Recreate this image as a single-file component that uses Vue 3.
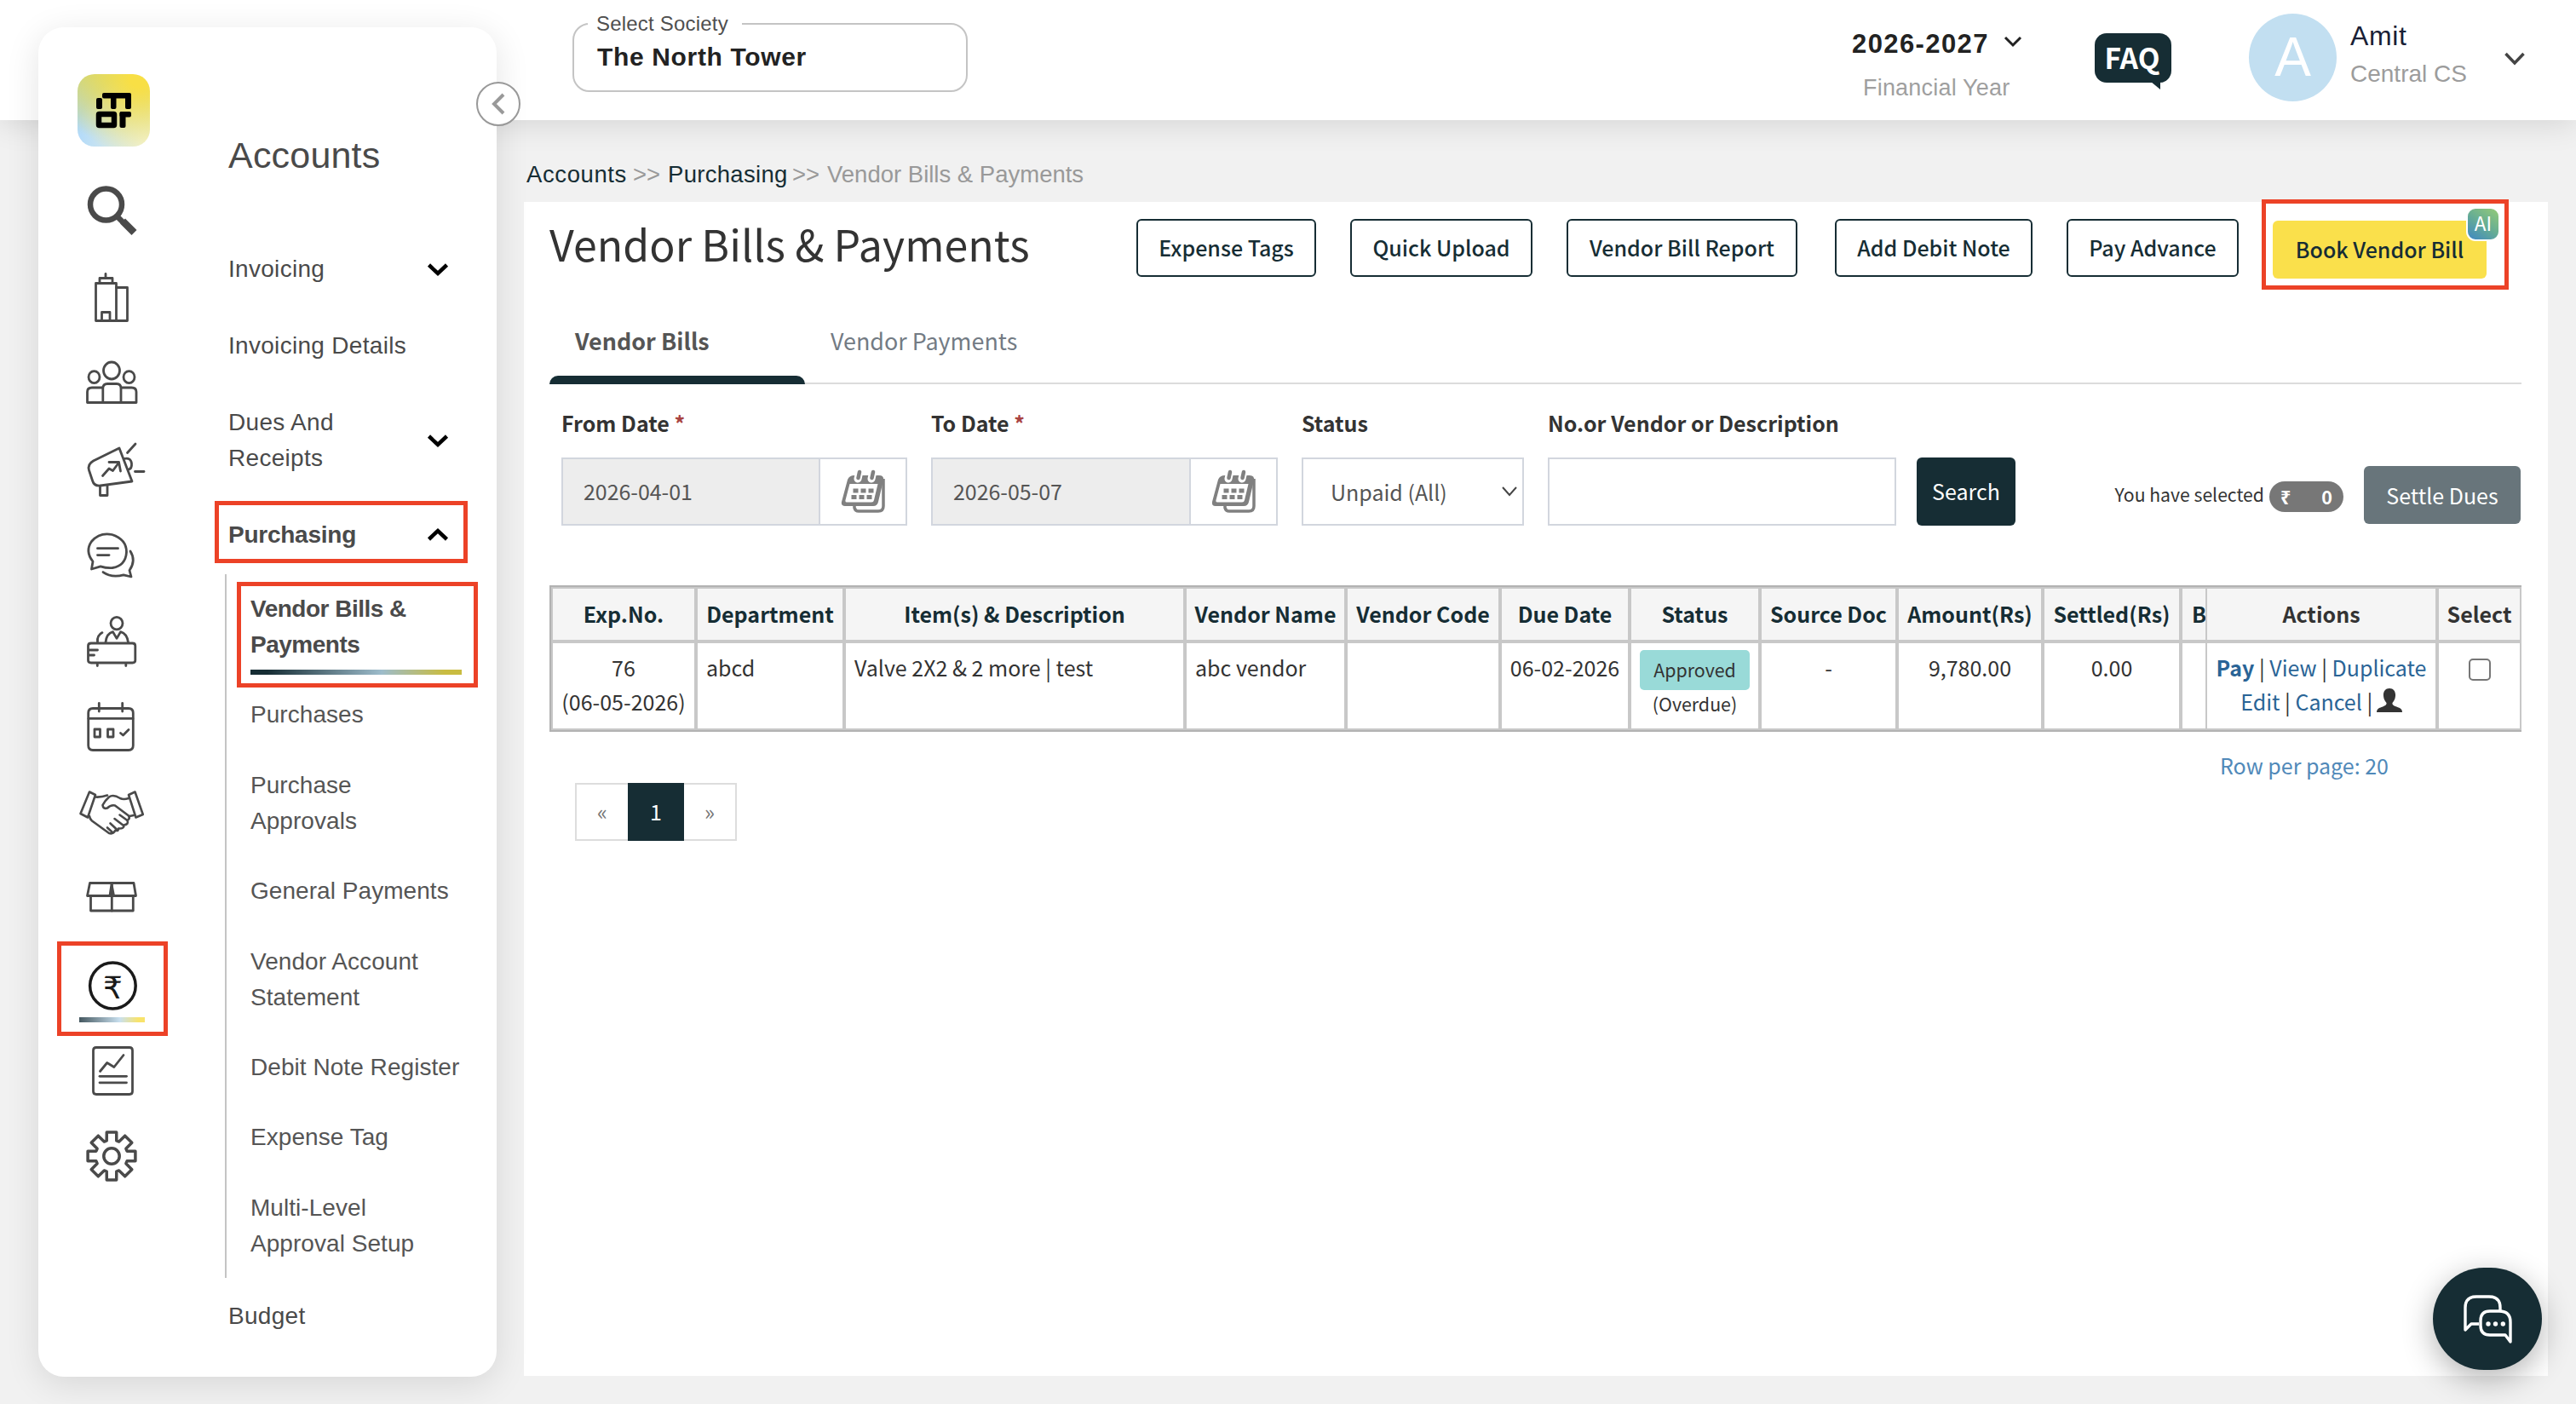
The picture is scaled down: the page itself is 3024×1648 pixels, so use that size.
<script setup>
import { ref } from 'vue'

const menu = ref([
  { label: 'Invoicing', arrow: 'down' },
  { label: 'Invoicing Details' },
  { label: 'Dues And Receipts', arrow: 'down' },
  { label: 'Purchasing', arrow: 'up', active: true },
])

const submenu = ref([
  'Vendor Bills & Payments',
  'Purchases',
  'Purchase Approvals',
  'General Payments',
  'Vendor Account Statement',
  'Debit Note Register',
  'Expense Tag',
  'Multi-Level Approval Setup',
])

const actions = ref([
  { label: 'Expense Tags', width: 211 },
  { label: 'Quick Upload', width: 214 },
  { label: 'Vendor Bill Report', width: 271 },
  { label: 'Add Debit Note', width: 232 },
  { label: 'Pay Advance', width: 202 },
])

const columns = ref([
  { label: 'Exp.No.', width: 172 },
  { label: 'Department', width: 174 },
  { label: 'Item(s) & Description', width: 400 },
  { label: 'Vendor Name', width: 189 },
  { label: 'Vendor Code', width: 181 },
  { label: 'Due Date', width: 152 },
  { label: 'Status', width: 153 },
  { label: 'Source Doc', width: 161 },
  { label: 'Amount(Rs)', width: 171 },
  { label: 'Settled(Rs)', width: 162 },
  { label: 'B', width: 27, cls: 'cut' },
  { label: 'Actions', width: 274, cls: 'dark first-fixed' },
  { label: 'Select', width: 97, cls: 'dark last' },
])

const dateFields = ref([
  { label: 'From Date', value: '2026-04-01', width: 406 },
  { label: 'To Date', value: '2026-05-07', width: 407 },
])

// eight teeth around the hub
const gearPath = () => {
  const pts = []
  for (let i = 0; i < 8; i++) {
    const a = (i * Math.PI) / 4 - Math.PI / 2
    const steps = [
      [19, -0.31],
      [28.5, -0.2],
      [28.5, 0.2],
      [19, 0.31],
    ]
    steps.forEach(([r, d]) => {
      pts.push(`${(40 + r * Math.cos(a + d)).toFixed(1)} ${(39 + r * Math.sin(a + d)).toFixed(1)}`)
    })
  }
  return 'M' + pts.join('L') + 'Z'
}

const icons = ref([
  { name: 'search', width: 6.5, paths: ['M15 32a18.5 18.5 0 1 0 37 0a18.5 18.5 0 1 0 -37 0', 'M47 46.500L52 51.500'] },
  {
    name: 'building',
    width: 2.8,
    paths: [
      'M21.500 23.500H45.500V67.500H21.500Z',
      'M26 23V17.500H41V23',
      'M33 17V12.500',
      'M45.500 28.500H58.500V67.500H45.500',
      'M28.500 67V57.500H38V67',
    ],
  },
  {
    name: 'people',
    width: 2.8,
    paths: [
      'M30.500 25a9.500 10 0 1 0 19 0a9.500 10 0 1 0 -19 0',
      'M13 32.600a6.500 7 0 1 0 13 0a6.500 7 0 1 0 -13 0',
      'M54 32.600a6.500 7 0 1 0 13 0a6.500 7 0 1 0 -13 0',
      'M29.800 62.500V46Q29.800 40.500 35 40.500H46Q51 40.500 51 46V62.500',
      'M29 45H17Q11.500 45 11.500 50V62.500H69V50Q69 45 63.500 45H52',
    ],
  },
  {
    name: 'megaphone',
    width: 2.8,
    paths: [
      'M49 15L18.500 30Q11.500 34 13.500 41L17.500 53Q19.500 60 27 59L64 54Z',
      'M54.500 27.500Q62.500 25.500 63.500 33Q64 39 60 40',
      'M58.500 20.500L68 10',
      'M67.500 42.500H78',
      'M29.500 47.500L37 39L41.500 41.500L48.500 32',
      'M37 31.500H48.500L50.500 42',
      'M26.500 60V70.500H35V59',
    ],
  },
  {
    name: 'chat',
    width: 2.8,
    paths: [
      'M16.500 56L18 47Q8.500 35 16.500 23.500Q26 12.500 40.500 15.500Q57.500 21 57.500 36Q56.500 52 41 54.500Q34 55 27 52.800Z',
      'M23.500 31.700H47.500',
      'M23.500 39.600H37',
      'M62 35Q69 46 61 57.500L63 65L54 62.800Q40 66.500 30 59.600',
    ],
  },
  {
    name: 'reception',
    width: 2.8,
    paths: [
      'M39 18.600a7 7.200 0 1 0 14 0a7 7.200 0 1 0 -14 0',
      'M33 41Q34 30.500 41.500 28.600L46 36.400L50.600 28.600Q58 30.500 59.500 41',
      'M23.500 41Q22.500 33 29 29.600',
      'M16 42H64.500Q67.800 42 67.800 45V62Q67.800 65 64.500 65H16Q12.500 65 12.500 62V45Q12.500 42 16 42Z',
      'M14 50H23.500',
      'M14 56H19.500',
      'M23.300 66V68.500',
      'M56.800 66V68.500',
    ],
  },
  {
    name: 'calendar',
    width: 2.8,
    paths: [
      'M18 17.500H60Q65.300 17.500 65.300 23V61Q65.300 66.500 60 66.500H18Q12.700 66.500 12.700 61V23Q12.700 17.500 18 17.500Z',
      'M13 29.400H65',
      'M25.300 11.500V21',
      'M52.700 11.500V21',
      'M20 42H26.500V51H20Z',
      'M35.500 42H42V51H35.500Z',
      'M50.500 46.500L53.500 49L60 42.500',
    ],
  },
  {
    name: 'handshake',
    width: 2.6,
    paths: [
      'M14 14.500L21 18L12 44.500L3.500 40Z',
      'M67.500 14.500L60 18L68.500 44.500L76.800 41Z',
      'M21 20.500Q28 21 35 18.500',
      'M60 22Q54 24 50 22Q42 17 37 20.500Q32 25 29.500 30Q30 35 35 33.500Q39 29.500 44 30.500L60 42.500Q62 46 58.500 48Q60.500 52.500 54.500 53.500Q55 58 48 57.500Q48.500 61 44.500 59.500Q42 64.500 37 63L17 48.500Q14.500 46.500 14 43',
      'M61 43L66 42',
      'M49.500 41.500L58.500 48',
      'M43.500 46L54 54',
      'M38.500 51.500L46 58.500',
      'M35 56.500L41 62',
    ],
  },
  {
    name: 'box',
    width: 2.8,
    paths: ['M14.500 20.500H66L68.500 35.500H11.500Z', 'M15.500 36V53H65.300V36', 'M40.300 21V53', 'M40 22L38 35H42.500Z'],
  },
  { name: 'accounts', width: 3.5, paths: ['M14.600 40a26.800 27 0 1 0 53.600 0a26.800 27 0 1 0 -53.600 0'] },
  {
    name: 'report',
    width: 2.8,
    paths: [
      'M22 11.500H61Q64.500 11.500 64.500 15V63Q64.500 66.500 61 66.500H22Q18.500 66.500 18.500 63V15Q18.500 11.500 22 11.500Z',
      'M26.500 39.500L34.700 29.500L42.900 34.500L54 20.500',
      'M26 45.300H57.500',
      'M26 52.800H57.500',
    ],
  },
  { name: 'settings', width: 3.5, paths: [gearPath(), 'M30.800 39a9.200 9.200 0 1 0 18.400 0a9.200 9.200 0 1 0 -18.400 0'] },
])
</script>

<template>
  <div class="page">
    <header class="topbar">
      <fieldset class="society">
        <legend>Select Society</legend>
        <span>The North Tower</span>
      </fieldset>

      <div class="year">
        <div class="year-value">
          2026-2027
          <svg width="24" height="16" viewBox="0 0 24 16" fill="none" stroke="#222" stroke-width="3">
            <polyline points="3 3 12 12 21 3" />
          </svg>
        </div>
        <div class="year-label">Financial Year</div>
      </div>

      <div class="faq">FAQ</div>

      <div class="user">
        <div class="avatar">A</div>
        <div class="user-text">
          <div class="user-name">Amit</div>
          <div class="user-role">Central CS</div>
        </div>
        <svg width="28" height="20" viewBox="0 0 28 20" fill="none" stroke="#444" stroke-width="3.5">
          <polyline points="3.500 4 14 15 24.500 4" />
        </svg>
      </div>
    </header>

    <div class="body">
      <aside class="sidebar">
        <div class="rail">
          <div class="logo">
            <svg width="85" height="85" viewBox="0 0 85 85">
              <rect x="22" y="28" width="7" height="13" rx="2" />
              <rect x="29" y="22" width="34" height="6.500" rx="2" />
              <rect x="39" y="24" width="6.500" height="17" rx="2" />
              <rect x="56" y="24" width="7" height="17" rx="2" />
              <rect x="25" y="47" width="18" height="13" rx="0.500" fill="none" stroke="#000" stroke-width="6.500" />
              <rect x="49.500" y="44" width="7" height="19" rx="2" />
              <rect x="49.500" y="44" width="13.500" height="6.500" rx="2" />
            </svg>
          </div>
          <nav>
            <div v-for="icon in icons" :key="icon.name" class="slot" :class="icon.name">
              <svg width="80" height="80" viewBox="0 0 80 80" fill="none" stroke-linecap="round" stroke-linejoin="round">
                <path v-for="(d, i) in icon.paths" :key="i" :d="d" :stroke-width="icon.width" />
                <path v-if="icon.name === 'search'" d="M53 51.500L66.500 65" stroke-width="8.500" stroke-linecap="butt" />
                <text v-if="icon.name === 'accounts'" x="41.500" y="55" text-anchor="middle">₹</text>
              </svg>
            </div>
          </nav>
        </div>

        <div class="menu">
          <h2>Accounts</h2>
          <div v-for="item in menu" :key="item.label" class="menu-item" :class="{ 'is-active': item.active }">
            <span>{{ item.label }}</span>
            <svg v-if="item.arrow" width="28" height="18" viewBox="0 0 28 18" fill="none" stroke="#000" stroke-width="4.500">
              <polyline :points="item.arrow === 'down' ? '3.500 4 14 14 24.500 4' : '3.500 14 14 4 24.500 14'" />
            </svg>
          </div>
          <div class="submenu">
            <div v-for="(item, index) in submenu" :key="item" class="submenu-item" :class="{ 'is-active': index === 0 }">
              {{ item }}
            </div>
          </div>
          <div class="menu-item">Budget</div>
        </div>

        <button class="collapse">
          <svg width="18" height="26" viewBox="0 0 18 26" fill="none" stroke="#999" stroke-width="4">
            <polyline points="15 2 4 13 15 24" />
          </svg>
        </button>
      </aside>

      <main>
        <div class="breadcrumb">
          <a class="crumb-first">Accounts</a><i>&gt;&gt;</i><a class="crumb-second">Purchasing</a><i>&gt;&gt;</i><span>Vendor Bills &amp; Payments</span>
        </div>

        <section class="panel">
          <div class="title-row">
            <h1>Vendor Bills &amp; Payments</h1>
            <div class="actions">
              <button v-for="a in actions" :key="a.label" class="btn-outline" :style="{ width: a.width + 'px' }">
                {{ a.label }}
              </button>
              <div class="book">
                <button class="btn-book">Book Vendor Bill</button>
                <span class="ai">AI</span>
              </div>
            </div>
          </div>

          <div class="tabs">
            <div class="tab is-active">Vendor Bills</div>
            <div class="tab">Vendor Payments</div>
          </div>

          <div class="filters">
            <div v-for="f in dateFields" :key="f.label" class="field" :style="{ width: f.width + 'px' }">
              <label>{{ f.label }} <em>*</em></label>
              <div class="date-input">
                <span>{{ f.value }}</span>
                <div class="date-btn">
                  <svg width="54" height="54" viewBox="0 0 54 54">
                    <path d="M16 44V46Q17 50 21 50H44Q50 50 50 44V12" fill="none" stroke="#808080" stroke-width="3.500" />
                    <path d="M16 8H45Q51 8 50 14L44 39Q43 44 38 44H5Q0 44 1 39L8 13Q10 8 16 8Z" fill="#808080" />
                    <path d="M10.500 18H43.500L39 37Q38.500 39.500 36 39.500H7Q5 39.500 5.500 37Z" fill="#fff" />
                    <path d="M22 3L20 12M38 3L36 12" stroke="#fff" stroke-width="9" stroke-linecap="round" />
                    <path d="M22 4L20.500 11M38 4L36.500 11" stroke="#808080" stroke-width="4.500" stroke-linecap="round" />
                    <path d="M14.500 26H20.500M23.500 26H29.500M32.500 26H38.500M12.500 33.500H18.500M21.500 33.500H27.500M30.500 33.500H36.500" stroke="#808080" stroke-width="5" />
                  </svg>
                </div>
              </div>
            </div>
            <div class="field status">
              <label>Status</label>
              <div class="select">
                Unpaid (All)
                <svg width="20" height="14" viewBox="0 0 20 14" fill="none" stroke="#444" stroke-width="2">
                  <polyline points="2 2 10 11 18 2" />
                </svg>
              </div>
            </div>
            <div class="field keyword">
              <label>No.or Vendor or Description</label>
              <div class="text-input"></div>
            </div>
            <button class="btn-search">Search</button>

            <div class="settle">
              <span class="settle-text">You have selected</span>
              <span class="pill"><b>₹</b><b>0</b></span>
              <button class="btn-settle">Settle Dues</button>
            </div>
          </div>

          <table>
            <colgroup>
              <col v-for="c in columns" :key="c.label" :style="{ width: c.width + 'px' }" />
            </colgroup>
            <thead>
              <tr>
                <th v-for="c in columns" :key="c.label" :class="c.cls">{{ c.label }}</th>
              </tr>
            </thead>
            <tbody>
              <tr>
                <td>76<br />(06-05-2026)</td>
                <td class="left">abcd</td>
                <td class="left">Valve 2X2 &amp; 2 more | test</td>
                <td class="left">abc vendor</td>
                <td></td>
                <td>06-02-2026</td>
                <td>
                  <div class="badge">Approved</div>
                  <div class="overdue">(Overdue)</div>
                </td>
                <td>-</td>
                <td>9,780.00</td>
                <td>0.00</td>
                <td></td>
                <td class="first-fixed row-links">
                  <div><a class="pay">Pay</a> | <a>View</a> | <a>Duplicate</a></div>
                  <div>
                    <a>Edit</a> | <a>Cancel</a> |
                    <svg width="30" height="28" viewBox="0 0 30 28" fill="#333">
                      <path d="M15 0C10 0 7.500 4 8 9C8.300 13 10 15 11.500 17C12 20 9 21 3 23Q0 24.500 0 28H30Q30 24.500 27 23C21 21 18 20 18.500 17C20 15 21.700 13 22 9C22.500 4 20 0 15 0Z" />
                    </svg>
                  </div>
                </td>
                <td class="last"><div class="checkbox"></div></td>
              </tr>
            </tbody>
          </table>

          <div class="table-footer">
            <div class="pagination">
              <span>«</span>
              <span class="current">1</span>
              <span>»</span>
            </div>
            <a class="per-page">Row per page: 20</a>
          </div>
        </section>
      </main>
    </div>

    <button class="chat-fab">
      <svg width="128" height="120" viewBox="0 0 128 120" fill="none" stroke="#fff" stroke-width="3.400" stroke-linejoin="round">
        <path d="M79 51V47Q79 34 66 34H51Q38 34 38 47V73L45 66H54" />
        <path d="M67 51H78Q91 51 91 64V87L85 79H67Q56 79 56 68V62Q56 51 67 51Z" />
        <g fill="#fff" stroke="none">
          <circle cx="65" cy="66" r="2.700" />
          <circle cx="73.500" cy="66" r="2.700" />
          <circle cx="82.300" cy="66" r="2.700" />
        </g>
      </svg>
    </button>
  </div>
</template>

<style>
body {
  margin: 0;
  overflow: hidden;
}
</style>

<style scoped>
.page {
  position: relative;
  width: 3024px;
  height: 1648px;
  overflow: hidden;
  background: #f1f1f1;
  color: #333;
  font-family: 'Noto Sans CJK SC', 'Noto Sans', sans-serif;
  font-size: 25px;
}

.page *,
.page *::before,
.page *::after {
  box-sizing: border-box;
}

button {
  border: none;
  padding: 0;
  font-family: inherit;
  font-size: 25px;
  cursor: pointer;
}

/* Top bar */
.topbar {
  display: flex;
  align-items: flex-start;
  height: 141px;
  padding-left: 672px;
  background: #fff;
  box-shadow: 0 4px 34px rgba(0, 0, 0, 0.12);
  font-family: 'Liberation Sans', Arial, sans-serif;
}

.society {
  width: 464px;
  height: 94px;
  margin: 14px 0 0;
  padding: 0 0 0 27px;
  border: 2px solid #c4c4c4;
  border-radius: 20px;
}

.society legend {
  margin-left: -11px;
  padding: 0 16px 0 10px;
  color: #4f4f4f;
  font-size: 24px;
  line-height: 28px;
  letter-spacing: 0.2px;
}

.society span {
  display: block;
  margin-top: 8px;
  color: #222;
  font-size: 30px;
  font-weight: 700;
  line-height: 34px;
  letter-spacing: 0.65px;
}

.year {
  margin-left: 1038px;
  width: 211px;
}

.year-value {
  display: flex;
  align-items: center;
  gap: 16px;
  margin-top: 32px;
  color: #222;
  font-size: 31px;
  font-weight: 700;
  line-height: 40px;
  letter-spacing: 1.4px;
}

.year-value svg {
  margin-top: -6px;
}

.year-label {
  margin: 11px 0 0 13px;
  color: #9f9f9f;
  font-size: 27px;
  line-height: 40px;
  letter-spacing: 0.2px;
}

.faq {
  position: relative;
  width: 90px;
  height: 58px;
  margin: 39px 0 0 74px;
  padding-right: 2px;
  border-radius: 14px;
  background: #162d34;
  color: #fff;
  font-family: 'Noto Sans CJK SC', sans-serif;
  font-size: 33.5px;
  font-weight: 700;
  line-height: 56px;
  text-align: center;
}

.faq::after {
  content: '';
  position: absolute;
  right: 13px;
  bottom: -8px;
  width: 11px;
  height: 9px;
  background: #162d34;
  clip-path: polygon(0 0, 100% 0, 100% 100%);
}

.user {
  display: flex;
  align-items: flex-start;
  margin: 16px 0 0 91px;
}

.avatar {
  width: 103px;
  height: 103px;
  border-radius: 50%;
  background: #c2dff1;
  color: #fff;
  font-size: 64px;
  line-height: 103px;
  text-align: center;
}

.user-text {
  width: 179px;
  margin-left: 16px;
  padding-top: 6px;
}

.user-name {
  color: #1a1f36;
  font-size: 32px;
  line-height: 40px;
  letter-spacing: 0.6px;
}

.user-role {
  margin-top: 5px;
  color: #9c9c9c;
  font-size: 28px;
  line-height: 40px;
}

.user > svg {
  margin-top: 43px;
}

/* Sidebar */
.body {
  display: flex;
  align-items: flex-start;
}

.sidebar {
  position: relative;
  display: flex;
  width: 538px;
  height: 1584px;
  margin: -109px 0 0 45px;
  border-radius: 30px;
  background: #fff;
  box-shadow: 0 8px 40px rgba(0, 0, 0, 0.11);
  font-family: 'Liberation Sans', Arial, sans-serif;
}

.rail {
  width: 223px;
  padding: 55px 0 0 46px;
}

.logo {
  width: 85px;
  height: 85px;
  border-radius: 20px;
  background: radial-gradient(circle at 85% 5%, #f8df45 10%, rgba(248, 223, 69, 0) 85%),
    radial-gradient(circle at 100% 100%, #f2f4dc 5%, rgba(242, 244, 220, 0) 75%),
    linear-gradient(5deg, #afd9fc 15%, #c6d48a 90%);
}

.logo svg,
.slot svg {
  display: block;
}

nav {
  margin-top: 25px;
}

.slot {
  position: relative;
  width: 80px;
  height: 101px;
  padding-top: 10.5px;
  stroke: #4a4a4a;
}

.slot.settings {
  padding-top: 10px;
}

.slot.accounts {
  stroke: #1a1a1a;
}

.slot text {
  stroke: none;
  fill: #1a1a1a;
  font-family: 'Liberation Sans', 'DejaVu Sans', sans-serif;
  font-size: 36px;
}

.slot.accounts::before {
  content: '';
  position: absolute;
  left: -24px;
  top: -1px;
  width: 130px;
  height: 111px;
  border: 5px solid #ec4227;
}

.slot.accounts::after {
  content: '';
  position: absolute;
  left: 2px;
  top: 88px;
  width: 77px;
  height: 6px;
  background: linear-gradient(90deg, #455860, #c9e0ef 62%, #f8e36b 90%);
}

.menu {
  padding-top: 125px;
  color: #4a4a4a;
  font-size: 28px;
  line-height: 42px;
}

.menu h2 {
  margin: 0 0 88px;
  font-size: 43px;
  font-weight: 400;
  line-height: 50px;
  letter-spacing: 0.2px;
}

.menu-item {
  position: relative;
  display: flex;
  align-items: center;
  justify-content: space-between;
  width: 260px;
  margin-bottom: 48px;
  letter-spacing: 0.3px;
}

.menu-item span {
  max-width: 210px;
}

.menu-item:nth-of-type(3) span {
  max-width: 140px;
}

.menu-item.is-active {
  margin-bottom: 25px;
  font-weight: 700;
  letter-spacing: -0.25px;
}

.menu-item.is-active::before {
  content: '';
  position: absolute;
  left: -16px;
  top: -19px;
  width: 297px;
  height: 73px;
  border: 5px solid #ec4227;
}

.submenu {
  width: 285px;
  height: 826px;
  margin: 0 0 24px -4px;
  padding: 20px 0 0 28px;
  border-left: 2px solid #c4c4c4;
  color: #555;
}

.submenu-item {
  position: relative;
  max-width: 255px;
  margin-bottom: 40.4px;
  letter-spacing: 0.05px;
}

.submenu-item:nth-child(3),
.submenu-item:nth-child(8) {
  max-width: 210px;
}

.submenu-item.is-active {
  max-width: 200px;
  color: #4a4a4a;
  font-weight: 700;
  letter-spacing: -0.5px;
}

.submenu-item.is-active::before {
  content: '';
  position: absolute;
  left: -16px;
  top: -11px;
  width: 283px;
  height: 124px;
  border: 5px solid #ec4227;
}

.submenu-item.is-active::after {
  content: '';
  position: absolute;
  left: 0;
  top: 92px;
  width: 248px;
  height: 6px;
  background: linear-gradient(90deg, #162d34 8%, #9dbccb 62%, #c9bc41 92%);
}

.collapse {
  position: absolute;
  left: 514px;
  top: 64px;
  display: flex;
  align-items: center;
  justify-content: center;
  width: 52px;
  height: 52px;
  border: 2px solid #999;
  border-radius: 50%;
  background: #fff;
}

/* Content */
main {
  width: 2376px;
  margin-left: 32px;
  padding-top: 43px;
}

.breadcrumb {
  display: flex;
  height: 40px;
  margin: 0 0 13px 3px;
  color: #999;
  font-family: 'Liberation Sans', Arial, sans-serif;
  font-size: 27.5px;
  line-height: 41px;
}

.breadcrumb a {
  color: #162d34;
}

.breadcrumb i {
  width: 48px;
  padding-left: 7px;
  font-style: normal;
}

.crumb-first {
  width: 118px;
  letter-spacing: 0.6px;
}

.crumb-second {
  width: 139px;
  letter-spacing: 0.3px;
}

.panel {
  height: 1378px;
  padding-left: 30px;
  background: #fff;
}

.title-row {
  display: flex;
  align-items: flex-start;
  height: 142px;
  padding: 20px 72px 0 0;
}

h1 {
  margin: 0;
  font-size: 50px;
  font-weight: 400;
  line-height: 56px;
  letter-spacing: 0.05px;
}

.actions {
  display: flex;
  gap: 40px;
  margin-left: auto;
}

.btn-outline {
  height: 68px;
  padding-bottom: 3px;
  border: 2px solid #162d34;
  border-radius: 6px;
  background: #fff;
  color: #162d34;
  font-weight: 500;
  white-space: nowrap;
}

.btn-outline:nth-child(4) {
  margin-left: 4px;
}

.book {
  position: relative;
  padding-top: 2px;
}

.book::before {
  content: '';
  position: absolute;
  left: -13px;
  top: -23px;
  width: 290px;
  height: 106px;
  border: 5px solid #ec4227;
}

.btn-book {
  position: relative;
  width: 251px;
  height: 68px;
  padding-bottom: 2px;
  border-radius: 6px;
  background: #fae04b;
  color: #162d34;
  font-weight: 500;
}

.ai {
  position: absolute;
  left: 227px;
  top: -14px;
  width: 40px;
  height: 40px;
  border: 2px solid #fff;
  border-radius: 11px;
  background: linear-gradient(35deg, #3f87c4, #66ad94 50%, #95cb78);
  color: #fff;
  font-size: 22.5px;
  line-height: 33px;
  text-align: center;
}

.tabs {
  display: flex;
  width: 2315px;
  height: 72px;
  border-bottom: 2px solid #dcdcdc;
}

.tab {
  position: relative;
  width: 300px;
  padding-left: 30px;
  color: #737b84;
  font-size: 26.9px;
  line-height: 42px;
}

.tab.is-active {
  color: #555;
  font-weight: 700;
}

.tab.is-active::after {
  content: '';
  position: absolute;
  left: 0;
  bottom: -2px;
  width: 300px;
  height: 10px;
  border-radius: 10px 10px 0 0;
  background: #162d34;
}

.filters {
  display: flex;
  align-items: flex-end;
  gap: 28px;
  width: 2315px;
  margin-top: 25px;
  padding-left: 14px;
}

.field label {
  display: block;
  margin-bottom: 21px;
  font-weight: 700;
  line-height: 40px;
}

.field em {
  color: #a94442;
  font-style: normal;
}

.date-input {
  display: flex;
  height: 80px;
  border: 2px solid #d2d6de;
  background: #ededed;
  color: #555;
  line-height: 75px;
}

.date-input span {
  flex: 1;
  padding-left: 24px;
  letter-spacing: -0.05px;
}

.date-btn {
  display: flex;
  align-items: center;
  width: 102px;
  padding-left: 24px;
  border-left: 2px solid #d2d6de;
  background: #fff;
}

.status {
  width: 261px;
}

.select,
.text-input {
  height: 80px;
  border: 2px solid #d2d6de;
  background: #fff;
}

.select {
  display: flex;
  align-items: center;
  justify-content: space-between;
  padding: 0 5px 1px 32px;
  color: #555;
}

.keyword {
  width: 409px;
}

.btn-search {
  width: 116px;
  height: 80px;
  margin-left: -4px;
  padding-bottom: 2px;
  border-radius: 6px;
  background: #162d34;
  color: #fff;
}

.settle {
  display: flex;
  align-items: center;
  height: 68px;
  margin: 0 1px 2px auto;
}

.settle-text {
  margin-top: -3px;
  font-size: 21.2px;
}

.pill {
  display: flex;
  justify-content: space-between;
  width: 87px;
  height: 36px;
  margin: 4px 24px 0 6px;
  padding: 0 13px;
  border-radius: 18px;
  background: #777;
  color: #fff;
  font-size: 21.5px;
  line-height: 35px;
}

.btn-settle {
  width: 184px;
  height: 68px;
  padding-bottom: 1px;
  border-radius: 6px;
  background: #68757b;
  color: #fff;
}

/* Table */
table {
  width: 2315px;
  margin-top: 70px;
  border: 2px solid #b2b2b2;
  border-right: none;
  border-collapse: separate;
  border-spacing: 0;
  table-layout: fixed;
}

th,
td {
  padding: 0;
  border-right: 4px solid #c8c8c8;
  text-align: center;
  white-space: nowrap;
}

th:first-child,
td:first-child {
  border-left: 2px solid #c8c8c8;
}

th {
  height: 66px;
  padding-bottom: 2px;
  border-top: 2px solid #c8c8c8;
  border-bottom: 4px solid #c8c8c8;
  background: #f5f5f5;
  color: #162d34;
  font-weight: 700;
  line-height: 40px;
}

th.dark {
  color: #333;
}

th.cut {
  padding-left: 11px;
  overflow: hidden;
  text-align: left;
}

td {
  height: 102px;
  padding-top: 8px;
  border-bottom: 2px solid #c8c8c8;
  line-height: 40px;
  vertical-align: top;
}

th:nth-child(11),
td:nth-child(11) {
  border-right: none;
}

.first-fixed {
  border-left: 2px solid #c8c8c8;
}

th.last,
td.last {
  border-right: 2px solid #c8c8c8;
}

td.left {
  padding-left: 10px;
  text-align: left;
}

.badge {
  width: 129px;
  height: 47px;
  border-radius: 5px;
  margin: 0 auto;
  background: #99dad8;
  font-size: 21.4px;
  line-height: 45px;
}

.overdue {
  font-size: 21.4px;
  line-height: 32px;
}

.row-links a {
  color: #2a6496;
}

.row-links .pay {
  font-weight: 700;
}

.row-links svg {
  margin-left: -1px;
  vertical-align: -2px;
}

.checkbox {
  width: 26px;
  height: 26px;
  margin: 10px auto 0;
  border: 2px solid #767676;
  border-radius: 5px;
}

.table-footer {
  display: flex;
  align-items: flex-start;
}

.pagination {
  display: flex;
  height: 68px;
  margin: 60px 0 0 30px;
  line-height: 65px;
}

.pagination span {
  width: 62px;
  border: 2px solid #ddd;
  border-right: none;
  color: #777;
  font-size: 25px;
  line-height: 62px;
  text-align: center;
}

.pagination span:last-child {
  border-right: 2px solid #ddd;
  border-left: none;
}

.pagination .current {
  width: 66px;
  border: none;
  background: #162d34;
  color: #fff;
  line-height: 66px;
}

.per-page {
  margin: 19px 187px 0 auto;
  color: #5089b9;
  line-height: 40px;
}

.chat-fab {
  position: absolute;
  left: 2856px;
  top: 1488px;
  width: 128px;
  height: 120px;
  border-radius: 60px;
  background: #162d34;
  box-shadow: 0 10px 36px rgba(0, 0, 0, 0.3);
}

.chat-fab svg {
  display: block;
}
</style>
